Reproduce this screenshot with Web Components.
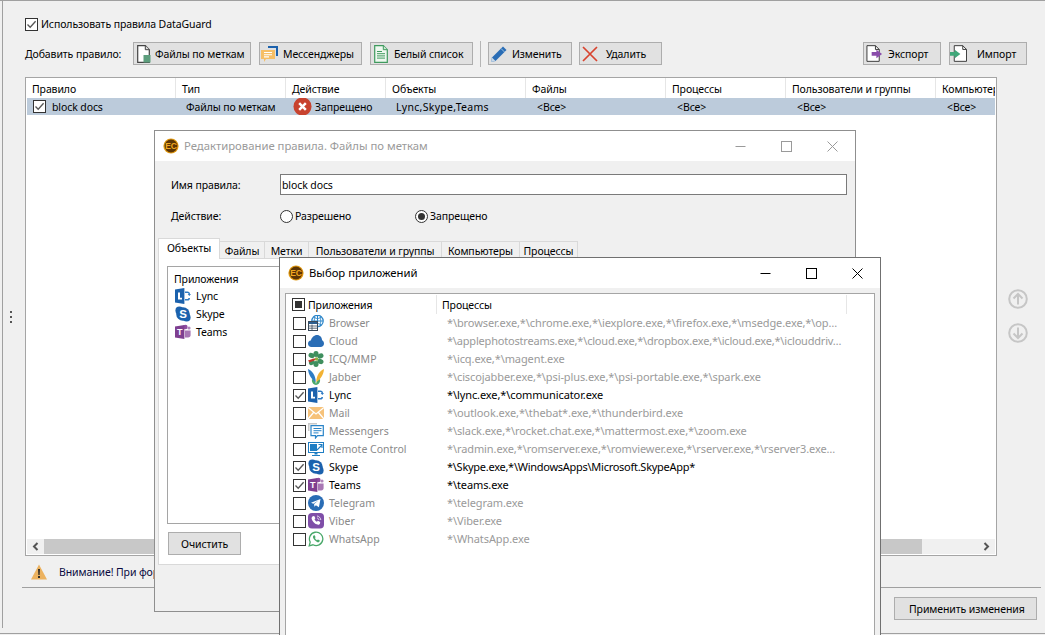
<!DOCTYPE html>
<html lang="ru">
<head>
<meta charset="utf-8">
<title>DataGuard</title>
<style>
  html, body { margin: 0; padding: 0; height: 100%; overflow: hidden; background: #f0f0f0; }
  body { font: 10.5px/14px "Noto Sans", "DejaVu Sans", sans-serif; letter-spacing: -0.1px; color: #000; }
</style>
</head>
<body>

<app-shell>
  <app-rules></app-rules>

  <app-window slot="windows" icon="ec" muted style="left:154px;top:130px;width:702px;height:482px" heading="Редактирование правила. Файлы по меткам">
    <rule-form></rule-form>
  </app-window>

  <app-window slot="windows" icon="ec" style="left:279px;top:257px;width:602px;height:420px" heading="Выбор приложений">
    <app-picker>
      <picker-row name="Browser" icon="browser" proc="*\browser.exe,*\chrome.exe,*\iexplore.exe,*\firefox.exe,*\msedge.exe,*\op…"></picker-row>
      <picker-row name="Cloud" icon="cloud" style="--ls:-0.19px" proc="*\applephotostreams.exe,*\cloud.exe,*\dropbox.exe,*\icloud.exe,*\iclouddriv…"></picker-row>
      <picker-row name="ICQ/MMP" icon="icq" proc="*\icq.exe,*\magent.exe"></picker-row>
      <picker-row name="Jabber" icon="jabber" proc="*\ciscojabber.exe,*\psi-plus.exe,*\psi-portable.exe,*\spark.exe"></picker-row>
      <picker-row name="Lync" icon="lync" checked proc="*\lync.exe,*\communicator.exe"></picker-row>
      <picker-row name="Mail" icon="mail" proc="*\outlook.exe,*\thebat*.exe,*\thunderbird.exe"></picker-row>
      <picker-row name="Messengers" icon="messengers" proc="*\slack.exe,*\rocket.chat.exe,*\mattermost.exe,*\zoom.exe"></picker-row>
      <picker-row name="Remote Control" icon="remote" proc="*\radmin.exe,*\romserver.exe,*\romviewer.exe,*\rserver.exe,*\rserver3.exe…"></picker-row>
      <picker-row name="Skype" icon="skype" checked style="--ls:-0.27px" proc="*\Skype.exe,*\WindowsApps\Microsoft.SkypeApp*"></picker-row>
      <picker-row name="Teams" icon="teams" checked proc="*\teams.exe"></picker-row>
      <picker-row name="Telegram" icon="telegram" proc="*\telegram.exe"></picker-row>
      <picker-row name="Viber" icon="viber" proc="*\Viber.exe"></picker-row>
      <picker-row name="WhatsApp" icon="whatsapp" proc="*\WhatsApp.exe"></picker-row>
    </app-picker>
  </app-window>
</app-shell>

<script>
const ICONS = {
  ec: `<svg viewBox="0 0 16 16"><circle cx="8" cy="8" r="7.6" fill="#e29a12"/><circle cx="8" cy="8" r="6.4" fill="#5c3505"/><text x="8" y="11" text-anchor="middle" font-size="8.5" font-weight="700" font-family="Liberation Sans" fill="#f0a820">EC</text></svg>`,
  lync: `<svg viewBox="0 0 16 16"><path d="M0 1.600 9.400 0v16L0 14.400z" fill="#1c62ad"/><path d="M3 4.500v7h4V9.800H5V4.500z" fill="#fff"/><path d="M10 3.500h2.400c1.600 0 2.600 1 2.600 2.600h1l-1.700 2-1.700-2h1c0-.7-.4-1.100-1.200-1.100H10z" fill="#2f7bc4"/><path d="M10 12.500h2.400c1.600 0 2.600-1 2.600-2.600h-1.600c0 .7-.4 1.100-1.200 1.100H10z" fill="#2f7bc4"/></svg>`,
  skype: `<svg viewBox="0 0 16 16"><circle cx="4.400" cy="4.400" r="4" fill="#1c62ad"/><circle cx="11.600" cy="11.600" r="4" fill="#1c62ad"/><circle cx="8" cy="8" r="6.800" fill="#1c62ad"/><text x="8" y="12" text-anchor="middle" font-size="11.500" font-weight="700" font-family="Liberation Sans" fill="#fff">S</text></svg>`,
  teams: `<svg viewBox="0 0 16 16"><circle cx="10.400" cy="3" r="2.200" fill="#8f4d9f"/><circle cx="14" cy="4" r="1.600" fill="#b184bb"/><path d="M10 6.400h5.600V11c0 1.400-1 2.400-2.400 2.400H10z" fill="#a877b4"/><path d="M0 2.600 9.400 1v14L0 13.400z" fill="#7f3f90"/><text x="4.700" y="11.200" text-anchor="middle" font-size="9" font-weight="700" font-family="Liberation Sans" fill="#fff">T</text></svg>`,
  browser: `<svg viewBox="0 0 16 16"><circle cx="9.500" cy="6" r="5.700" fill="#fff" stroke="#2a84c8" stroke-width="1.200"/><path d="M4 6h11M9.500.5v11M6 2c2 2 5 2 7 0M6 10c2-2 5-2 7 0" fill="none" stroke="#2a84c8"/><path d="M7 2.200C6 4 6 8 7 10M12 2.200c1 1.800 1 5.800 0 7.800" fill="none" stroke="#2a84c8" stroke-width=".8"/><rect x=".5" y="6.500" width="9" height="9" fill="#fff" stroke="#3a4a5a"/><path d="M1 7h8v2H1z" fill="#2d5f8f"/><path d="M1 11h8M1 13.200h8M4 9.500v6" stroke="#3a4a5a" stroke-width=".8"/></svg>`,
  cloud: `<svg viewBox="0 0 16 16"><path d="M3.400 14C1.400 14 0 12.600 0 10.800c0-1.700 1.100-3 2.800-3.200C3.700 4.400 6.200 2 9 2c3 0 5 2.300 5.100 5.200 1.100.6 1.900 1.800 1.900 3.200 0 2-1.500 3.600-3.500 3.600z" fill="#2a6db5"/></svg>`,
  icq: `<svg viewBox="0 0 16 16"><g fill="#3f8f5e"><ellipse cx="8" cy="3" rx="2.600" ry="3"/><ellipse cx="12.400" cy="5" rx="3.200" ry="2.600" transform="rotate(-25 12.400 5)"/><ellipse cx="12.400" cy="10.500" rx="3.200" ry="2.600" transform="rotate(25 12.400 10.500)"/><ellipse cx="8" cy="13" rx="2.600" ry="3"/><ellipse cx="3.600" cy="4.500" rx="3.200" ry="2.600" transform="rotate(25 3.600 4.500)"/><ellipse cx="3.800" cy="11.500" rx="3" ry="2.400" transform="rotate(-30 3.800 11.500)"/></g><path d="M0 9.400 6.500 7.200l1 1.800L1.500 11.600z" fill="#c0392b"/><circle cx="8.500" cy="8" r="1.800" fill="#8fae42"/></svg>`,
  jabber: `<svg viewBox="0 0 16 16"><path d="M4 10C7 11 8 13 8 16 5 15.500 3.500 13 4 10zM12 10C9 11 8 13 8 16 11 15.500 12.500 13 12 10z" fill="#4aa86a"/><path d="M0 0C4 1.500 7.500 6 7.800 13 3.500 10.500.5 6 0 0z" fill="#2f7cc4"/><path d="M16 0C15.500 6 12.500 10.500 8.200 13 8.500 6 12 1.500 16 0z" fill="#f2b233"/></svg>`,
  mail: `<svg viewBox="0 0 16 16"><rect y="2" width="16" height="12" fill="#f6c27a"/><path d="M0 2.500 8 9l8-6.500M0 14l5.500-6.500M16 14l-5.500-6.500" fill="none" stroke="#fff" stroke-width="1.300"/></svg>`,
  messengers: `<svg viewBox="0 0 16 16"><path d="M0 0h9v1.500H1.500V8H0z" fill="#c9c9c9"/><path d="M3 2.700h12.300v10H9.500L7.500 15v-2.300H3z" fill="#fff" stroke="#2a84c8" stroke-width="1.200"/><path d="M5.500 5.500h8M5.500 7.700h8M5.500 9.900h5" stroke="#2a84c8"/></svg>`,
  remote: `<svg viewBox="0 0 16 16"><rect x=".5" y="1.500" width="15" height="10" fill="#fff" stroke="#1f7ec4"/><rect x="2" y="3" width="7" height="7" fill="#1f7ec4"/><path d="M9 9l5-5M10.500 3.500h3.500v3.500" fill="none" stroke="#1f7ec4" stroke-width="1.100"/><path d="M6.500 11.500h3v2h-3zM4 14h8v1H4z" fill="#1f7ec4"/></svg>`,
  telegram: `<svg viewBox="0 0 16 16"><circle cx="8" cy="8" r="8" fill="#2a6db5"/><path d="M3 7.800 12.500 4l-1.600 8.300-3-2.100-1.500 1.600-.3-2.700 4.200-3.500L5.300 8.800z" fill="#fff"/></svg>`,
  viber: `<svg viewBox="0 0 16 16"><rect width="16" height="15.500" rx="4" fill="#7f4ea8"/><path d="M4.800 3.200 6.200 3l1.200 2.300-.9 1c.5 1.200 1.200 2 2.400 2.500l1-1 2.300 1.300-.2 1.400c-.4 1-1.600 1.500-2.600 1.100C6.200 10.500 4.500 8.600 3.700 6c-.4-1.200.2-2.300 1.100-2.800z" fill="#fff"/><path d="M9 3c2 .2 3.600 1.800 3.800 4M9 5c1 .1 1.800.9 1.900 2" fill="none" stroke="#fff" stroke-width=".8"/></svg>`,
  whatsapp: `<svg viewBox="0 0 16 16"><path d="M1.200 14.800 2.200 11A6.700 6.700 0 1 1 5 13.800z" fill="#fff" stroke="#4aa86a" stroke-width="1.300"/><path d="M5.500 4.500 6.700 4.300l.9 1.900-.7.900c.4 1 1.100 1.700 2.100 2.100l.9-.8 1.800.9-.2 1.200c-.4.700-1.300 1-2.100.8C7 9.800 5.600 8.300 5 6.600c-.2-.8 0-1.600.5-2.100z" fill="#4aa86a"/></svg>`,
  tagfile: `<svg viewBox="0 0 14 18"><path d="M.7.700h7.600l4 4v12.600H.7z" fill="#fff" stroke="#444" stroke-width="1.200"/><path d="M8.300.700v4h4" fill="#ddd" stroke="#444"/><rect x="6.500" y="10" width="7" height="7.500" fill="#5d9e7d"/></svg>`,
  chat: `<svg viewBox="0 0 18 18"><path d="M7 1h10v10h-2V3H7z" fill="#1c62ad"/><path d="M0 5h14v9H5l-2 3v-3H0z" fill="#f6bf66"/><path d="M3 7.500h8M3 9.700h8M3 11.900h5" stroke="#fff" stroke-width="1.100"/></svg>`,
  whitelist: `<svg viewBox="0 0 14 18"><path d="M.7.700h8.600l4 4v12.600H.7z" fill="#eef8ef" stroke="#3f9a5e" stroke-width="1.200"/><path d="M9.300.700v4h4" fill="#cfe8d4" stroke="#3f9a5e"/><path d="M3 6.500h5M3 8.700h8M3 10.900h8M3 13.100h8" stroke="#3f9a5e"/></svg>`,
  pencil: `<svg viewBox="0 0 18 18"><path d="M13 1.500 16.500 5 5.500 16 1 17l1-4.500z" fill="#2a6db5"/><path d="M2 12.500 5.500 16 1 17z" fill="#c8d8e8"/><path d="M11 3.500 14.500 7" stroke="#9cc0e0"/></svg>`,
  cross: `<svg viewBox="0 0 16 16"><path d="M1 1l14 14M15 1 1 15" stroke="#d8432e" stroke-width="1.700" fill="none"/></svg>`,
  exportfile: `<svg viewBox="0 0 18 18"><path d="M1 .7h9l4 4V17.300H1z" fill="#fff" stroke="#333"/><path d="M10 .7v4h4" fill="none" stroke="#333"/><path d="M6 7.500h5V5l6 4.500L11 14v-2.500H6z" fill="#8a4dab"/></svg>`,
  importfile: `<svg viewBox="0 0 18 18"><path d="M4.500 .7h9l4 4V17.300h-13z" fill="#fff" stroke="#333"/><path d="M13.500 .7v4h4" fill="none" stroke="#333"/><path d="M0 7.500h5V5l6 4.500L5 14v-2.500H0z" fill="#3fa87a"/></svg>`,
  denied: `<svg viewBox="0 0 20 20"><circle cx="10" cy="10" r="9.500" fill="#c8432f"/><path d="M6.500 6.500l7 7M13.500 6.500l-7 7" stroke="#fff" stroke-width="2.600"/></svg>`,
  warning: `<svg viewBox="0 0 16 16"><path d="M8 .5 16 15.500H0z" fill="#ecb25f"/><path d="M7.100 5h1.800l-.3 6H7.400zM7.100 12h1.800v2H7.100z" fill="#222"/></svg>`,
  up: `<svg viewBox="0 0 20 20"><circle cx="10" cy="10" r="8.800" fill="none" stroke="#c6c6c6" stroke-width="2"/><path d="M10 15.500V5M5.500 9.500 10 5l4.500 4.500" fill="none" stroke="#c6c6c6" stroke-width="2"/></svg>`,
  down: `<svg viewBox="0 0 20 20"><circle cx="10" cy="10" r="8.800" fill="none" stroke="#c6c6c6" stroke-width="2"/><path d="M10 4.500V15M5.500 10.500 10 15l4.500-4.500" fill="none" stroke="#c6c6c6" stroke-width="2"/></svg>`
};

class AppIcon extends HTMLElement {
  constructor() {
    super();
    this.attachShadow({ mode: "open" });
  }
  connectedCallback() {
    this.shadowRoot.innerHTML = `
      <style>
        :host { display: inline-block; width: 16px; height: 16px; flex: none; }
        svg { display: block; width: 100%; height: 100%; }
      </style>
      ${ICONS[this.getAttribute("name")] || ""}`;
  }
}
customElements.define("app-icon", AppIcon);

class AppCheck extends HTMLElement {
  constructor() {
    super();
    this.attachShadow({ mode: "open" });
  }
  connectedCallback() {
    let mark = "";
    if (this.hasAttribute("checked")) mark = `<svg viewBox="0 0 13 13"><path d="M2.500 6.500 5.200 9.300 10.600 3.200" fill="none" stroke="#555" stroke-width="1.300"/></svg>`;
    if (this.hasAttribute("mixed")) mark = `<i></i>`;
    this.shadowRoot.innerHTML = `
      <style>
        :host { display: inline-flex; align-items: center; justify-content: center; box-sizing: border-box; width: 13px; height: 13px; flex: none; border: 1px solid #333; background: #fff; }
        svg { position: absolute; width: 13px; height: 13px; }
        i { width: 7px; height: 7px; background: #333; }
      </style>
      ${mark}`;
  }
}
customElements.define("app-check", AppCheck);

class AppRadio extends HTMLElement {
  constructor() {
    super();
    this.attachShadow({ mode: "open" });
  }
  connectedCallback() {
    this.shadowRoot.innerHTML = `
      <style>
        :host { display: inline-flex; align-items: center; gap: 2px; }
        b { display: flex; align-items: center; justify-content: center; box-sizing: border-box; width: 13px; height: 13px; border: 1px solid #333; border-radius: 50%; background: #fff; }
        i { width: 7px; height: 7px; border-radius: 50%; background: #333; }
      </style>
      <b>${this.hasAttribute("checked") ? "<i></i>" : ""}</b><slot></slot>`;
  }
}
customElements.define("app-radio", AppRadio);

class AppButton extends HTMLElement {
  constructor() {
    super();
    this.attachShadow({ mode: "open" });
  }
  connectedCallback() {
    const icon = this.getAttribute("icon");
    this.shadowRoot.innerHTML = `
      <style>
        :host { display: inline-flex; align-items: center; box-sizing: border-box; height: 23px; flex: none; padding-left: var(--pad, 4px); gap: var(--gap, 5px); border: 1px solid #adadad; background: #e1e1e1; white-space: nowrap; }
        app-icon { width: var(--iw, 16px); height: var(--ih, 16px); }
      </style>
      ${icon ? `<app-icon name="${icon}"></app-icon>` : ""}<slot></slot>`;
  }
}
customElements.define("app-button", AppButton);

class AppShell extends HTMLElement {
  constructor() {
    super();
    this.attachShadow({ mode: "open" });
  }
  connectedCallback() {
    this.shadowRoot.innerHTML = `
      <style>
        :host { display: block; position: relative; width: 1045px; height: 635px; overflow: hidden; background: #f0f0f0; }
      </style>
      <slot></slot>
      <slot name="windows"></slot>`;
  }
}
customElements.define("app-shell", AppShell);

class AppRules extends HTMLElement {
  constructor() {
    super();
    this.attachShadow({ mode: "open" });
  }
  connectedCallback() {
    this.shadowRoot.innerHTML = `
      <style>
        :host { display: flex; flex-direction: column; box-sizing: border-box; height: 634px; border-top: 1px solid #a0a0a0; border-bottom: 1px solid #a0a0a0; }
        .pane { flex: 1; display: flex; flex-direction: column; min-height: 0; margin-left: 2px; margin-bottom: 5px; border-left: 1px solid #a0a0a0; }
        .use { display: flex; align-items: center; gap: 3px; margin: 16px 0 0 22px; height: 14px; }
        .bar { display: flex; align-items: center; gap: 8px; margin: 11px 18px 0 22px; height: 23px; }
        .bar .lbl { width: 100px; white-space: nowrap; }
        .sep { width: 1px; height: 26px; margin: 0 -1px; background: #b5b5b5; }
        .sp { flex: 1; }
        .mid { display: flex; height: 479px; margin-top: 12px; }
        .grip { width: 16px; padding-right: 6px; display: flex; flex-direction: column; align-items: center; justify-content: center; gap: 3px; }
        .grip i { width: 2px; height: 2px; background: #555; }
        .side { flex: 1; display: flex; flex-direction: column; align-items: center; justify-content: center; gap: 14px; padding: 0 6px 2px 0; box-sizing: border-box; }
        .side app-icon { width: 20px; height: 20px; }
        .warn { display: flex; align-items: center; gap: 12px; height: 32px; box-sizing: border-box; margin: 0 4px 0 19px; padding-left: 9px; border-bottom: 1px solid #a0a0a0; color: #0a0a40; }
        .foot { display: flex; justify-content: flex-end; margin: 9px 8px 0 0; }
      </style>
      <div class="pane">
        <div class="use"><app-check checked></app-check><span>Использовать правила DataGuard</span></div>
        <div class="bar">
          <span class="lbl">Добавить правило:</span>
          <app-button icon="tagfile" style="width:118px;--iw:14px;--ih:18px;--pad:3px;--gap:4px">Файлы по меткам</app-button>
          <app-button icon="chat" style="width:103px;--iw:18px;--ih:18px;--pad:1px;--gap:4px">Мессенджеры</app-button>
          <app-button icon="whitelist" style="width:103px;--iw:14px;--ih:18px;--pad:3px;--gap:6px">Белый список</app-button>
          <span class="sep"></span>
          <app-button icon="pencil" style="width:84px;--iw:18px;--ih:18px;--pad:1px;--gap:4px">Изменить</app-button>
          <app-button icon="cross" style="width:83px;margin-left:-1px;--pad:2px;--gap:8px">Удалить</app-button>
          <span class="sp"></span>
          <app-button icon="exportfile" style="width:78px;--iw:17px;--ih:17px;--pad:2px;--gap:5px">Экспорт</app-button>
          <app-button icon="importfile" style="width:78px;--iw:17px;--ih:17px;--pad:0;--gap:10px">Импорт</app-button>
        </div>
        <div class="mid">
          <div class="grip"><i></i><i></i><i></i></div>
          <rule-table></rule-table>
          <div class="side"><app-icon name="up"></app-icon><app-icon name="down"></app-icon></div>
        </div>
        <div class="warn"><app-icon name="warning"></app-icon><span>Внимание! При фор</span></div>
        <div class="foot"><app-button style="width:143px;--pad:14px">Применить изменения</app-button></div>
      </div>`;
  }
}
customElements.define("app-rules", AppRules);

class RuleTable extends HTMLElement {
  constructor() {
    super();
    this.attachShadow({ mode: "open" });
  }
  connectedCallback() {
    const heads = ["Правило", "Тип", "Действие", "Объекты", "Файлы", "Процессы", "Пользователи и группы", "Компьютеры"];
    this.shadowRoot.innerHTML = `
      <style>
        :host { display: flex; flex-direction: column; box-sizing: border-box; width: 972px; padding: 0 1px 1px; border: 1px solid #a5a5a5; background: #fff; }
        .cols { display: grid; grid-template-columns: 149px 110px 100px 140px 140px 120px 150px 1fr; }
        .head { height: 20px; }
        .head div { display: flex; align-items: center; padding: 1px 0 0 6px; border-right: 1px solid #e6e6e6; overflow: hidden; white-space: nowrap; }
        .head div:first-child { padding-left: 5px; }
        .head div:last-child { border-right: 0; }
        .row { height: 17px; background: #bccbdb; }
        .row div { display: flex; align-items: center; padding-left: 11px; white-space: nowrap; overflow: hidden; }
        .row div:first-child { padding-left: 6px; gap: 6px; }
        .row div:nth-child(2) { padding-left: 10px; }
        .row .act { padding-left: 7px; gap: 3px; }
        .row .obj { padding-left: 10px; letter-spacing: .3px; }
        .row app-icon { width: 19px; height: 19px; }
        .fill { flex: 1; }
        .scroll { display: flex; height: 15px; background: #f0f0f0; }
        .scroll b { width: 17px; display: flex; align-items: center; justify-content: center; }
        .scroll svg { width: 7px; height: 9px; }
        .thumb { width: 878px; background: #c8c8c8; }
        .rest { flex: 1; }
      </style>
      <div class="cols head">${heads.map(h => `<div>${h}</div>`).join("")}</div>
      <div class="cols row">
        <div><app-check checked></app-check>block docs</div>
        <div>Файлы по меткам</div>
        <div class="act"><app-icon name="denied"></app-icon>Запрещено</div>
        <div class="obj">Lync,Skype,Teams</div>
        <div>&lt;Все&gt;</div>
        <div>&lt;Все&gt;</div>
        <div>&lt;Все&gt;</div>
        <div>&lt;Все&gt;</div>
      </div>
      <div class="fill"></div>
      <div class="scroll">
        <b><svg viewBox="0 0 7 9"><path d="M5.500 1 2 4.500 5.500 8" fill="none" stroke="#555" stroke-width="2"/></svg></b>
        <span class="thumb"></span>
        <span class="rest"></span>
        <b><svg viewBox="0 0 7 9"><path d="M1.500 1 5 4.500 1.500 8" fill="none" stroke="#555" stroke-width="2"/></svg></b>
      </div>`;
  }
}
customElements.define("rule-table", RuleTable);

class AppWindow extends HTMLElement {
  constructor() {
    super();
    this.attachShadow({ mode: "open" });
  }
  connectedCallback() {
    const muted = this.hasAttribute("muted");
    const ink = muted ? "#9a9a9a" : "#000";
    this.shadowRoot.innerHTML = `
      <style>
        :host { display: flex; flex-direction: column; position: absolute; box-sizing: border-box; border: 1px solid ${muted ? "#8f8f8f" : "#707070"}; background: #f0f0f0; }
        .title { display: flex; align-items: center; height: 30px; flex: none; padding-left: 8px; background: #fff; }
        .name { flex: 1; margin-left: 5px; font-size: 11.3px; letter-spacing: 0; color: ${muted ? "#9a9a9a" : "#000"}; }
        .ctl { width: 46px; display: flex; justify-content: center; }
        .ctl svg { width: 11px; height: 11px; }
        .body { flex: 1; min-height: 0; display: flex; flex-direction: column; }
      </style>
      <div class="title">
        <app-icon name="${this.getAttribute("icon")}"></app-icon>
        <span class="name">${this.getAttribute("heading")}</span>
        <span class="ctl"><svg viewBox="0 0 11 11"><path d="M.5 5.500h10" stroke="${ink}"/></svg></span>
        <span class="ctl"><svg viewBox="0 0 11 11"><rect x=".5" y=".5" width="10" height="10" fill="none" stroke="${ink}"/></svg></span>
        <span class="ctl"><svg viewBox="0 0 11 11"><path d="M.5 .5l10 10M10.500 .5l-10 10" stroke="${ink}"/></svg></span>
      </div>
      <div class="body"><slot></slot></div>`;
  }
}
customElements.define("app-window", AppWindow);

class RuleForm extends HTMLElement {
  constructor() {
    super();
    this.attachShadow({ mode: "open" });
  }
  connectedCallback() {
    this.shadowRoot.innerHTML = `
      <style>
        :host { display: flex; flex-direction: column; flex: 1; min-height: 0; }
        .line { display: flex; align-items: center; padding-left: 16px; }
        .line > label { width: 109px; }
        .input { box-sizing: border-box; width: 567px; height: 21px; padding-left: 1px; display: flex; align-items: center; border: 1px solid #7a7a7a; background: #fff; }
        .tabs { display: grid; grid-template-columns: 62px 45px 44px 133px 78px 58px; justify-content: start; align-items: end; height: 21px; margin: 11px 0 0 3px; position: relative; top: 1px; }
        .tabs span { box-sizing: border-box; height: 18px; display: flex; align-items: center; justify-content: center; border: 1px solid #d9d9d9; border-left: 0; border-bottom: 0; }
        .tabs .on { height: 21px; padding-bottom: 3px; background: #fff; border-left: 1px solid #d9d9d9; position: relative; z-index: 1; }
        .panel { box-sizing: border-box; height: 307px; margin: 0 3px; padding: 7px 8px; background: #fff; border: 1px solid #d9d9d9; display: flex; flex-direction: column; }
        .list { flex: none; box-sizing: border-box; height: 258px; width: 670px; padding: 5px 6px; border: 1px solid #a5a5a5; }
        .list div { display: flex; align-items: center; gap: 5px; height: 18px; padding-left: 1px; }
        .list div:first-child { padding-left: 0; height: 13px; margin-bottom: 2px; }
        .panel app-button { margin: 8px 0 0 1px; }
      </style>
      <div class="line" style="margin-top:13px"><label>Имя правила:</label><span class="input">block docs</span></div>
      <div class="line" style="margin-top:11px;height:20px">
        <label>Действие:</label>
        <app-radio style="width:135px">Разрешено</app-radio>
        <app-radio checked>Запрещено</app-radio>
      </div>
      <div class="tabs">
        <span class="on">Объекты</span><span>Файлы</span><span>Метки</span><span>Пользователи и группы</span><span>Компьютеры</span><span>Процессы</span>
      </div>
      <div class="panel">
        <div class="list">
          <div>Приложения</div>
          <div><app-icon name="lync"></app-icon>Lync</div>
          <div><app-icon name="skype"></app-icon>Skype</div>
          <div><app-icon name="teams"></app-icon>Teams</div>
        </div>
        <app-button style="width:73px;--pad:12px">Очистить</app-button>
      </div>`;
  }
}
customElements.define("rule-form", RuleForm);

class AppPicker extends HTMLElement {
  constructor() {
    super();
    this.attachShadow({ mode: "open" });
  }
  connectedCallback() {
    this.shadowRoot.innerHTML = `
      <style>
        :host { display: block; flex: 1; box-sizing: border-box; margin: 5px 5px 0; padding: 1px 0 0 1px; border: 1px solid #a5a5a5; background: #fff; }
        .head { display: flex; height: 19px; }
        .head > div { display: flex; align-items: center; box-sizing: border-box; border-right: 1px solid #e6e6e6; }
        .a { width: 150px; padding-left: 5px; gap: 3px; }
        .b { width: 410px; padding-left: 5px; }
      </style>
      <div class="head">
        <div class="a"><app-check mixed></app-check>Приложения</div>
        <div class="b">Процессы</div>
      </div>
      <slot></slot>`;
  }
}
customElements.define("app-picker", AppPicker);

class PickerRow extends HTMLElement {
  constructor() {
    super();
    this.attachShadow({ mode: "open" });
  }
  connectedCallback() {
    const on = this.hasAttribute("checked");
    this.shadowRoot.innerHTML = `
      <style>
        :host { display: flex; align-items: center; height: 18px; padding-left: 6px; white-space: nowrap; }
        app-icon { margin-left: 2px; }
        .n { width: 118px; margin-left: 5px; letter-spacing: 0; color: ${on ? "#000" : "#8a8a8a"}; }
        .p { font-size: 11px; letter-spacing: var(--ls, -0.1px); color: ${on ? "#000" : "#9a9a9a"}; }
      </style>
      <app-check ${on ? "checked" : ""}></app-check>
      <app-icon name="${this.getAttribute("icon")}"></app-icon>
      <span class="n">${this.getAttribute("name")}</span>
      <span class="p">${this.getAttribute("proc")}</span>`;
  }
}
customElements.define("picker-row", PickerRow);
</script>
</body>
</html>
